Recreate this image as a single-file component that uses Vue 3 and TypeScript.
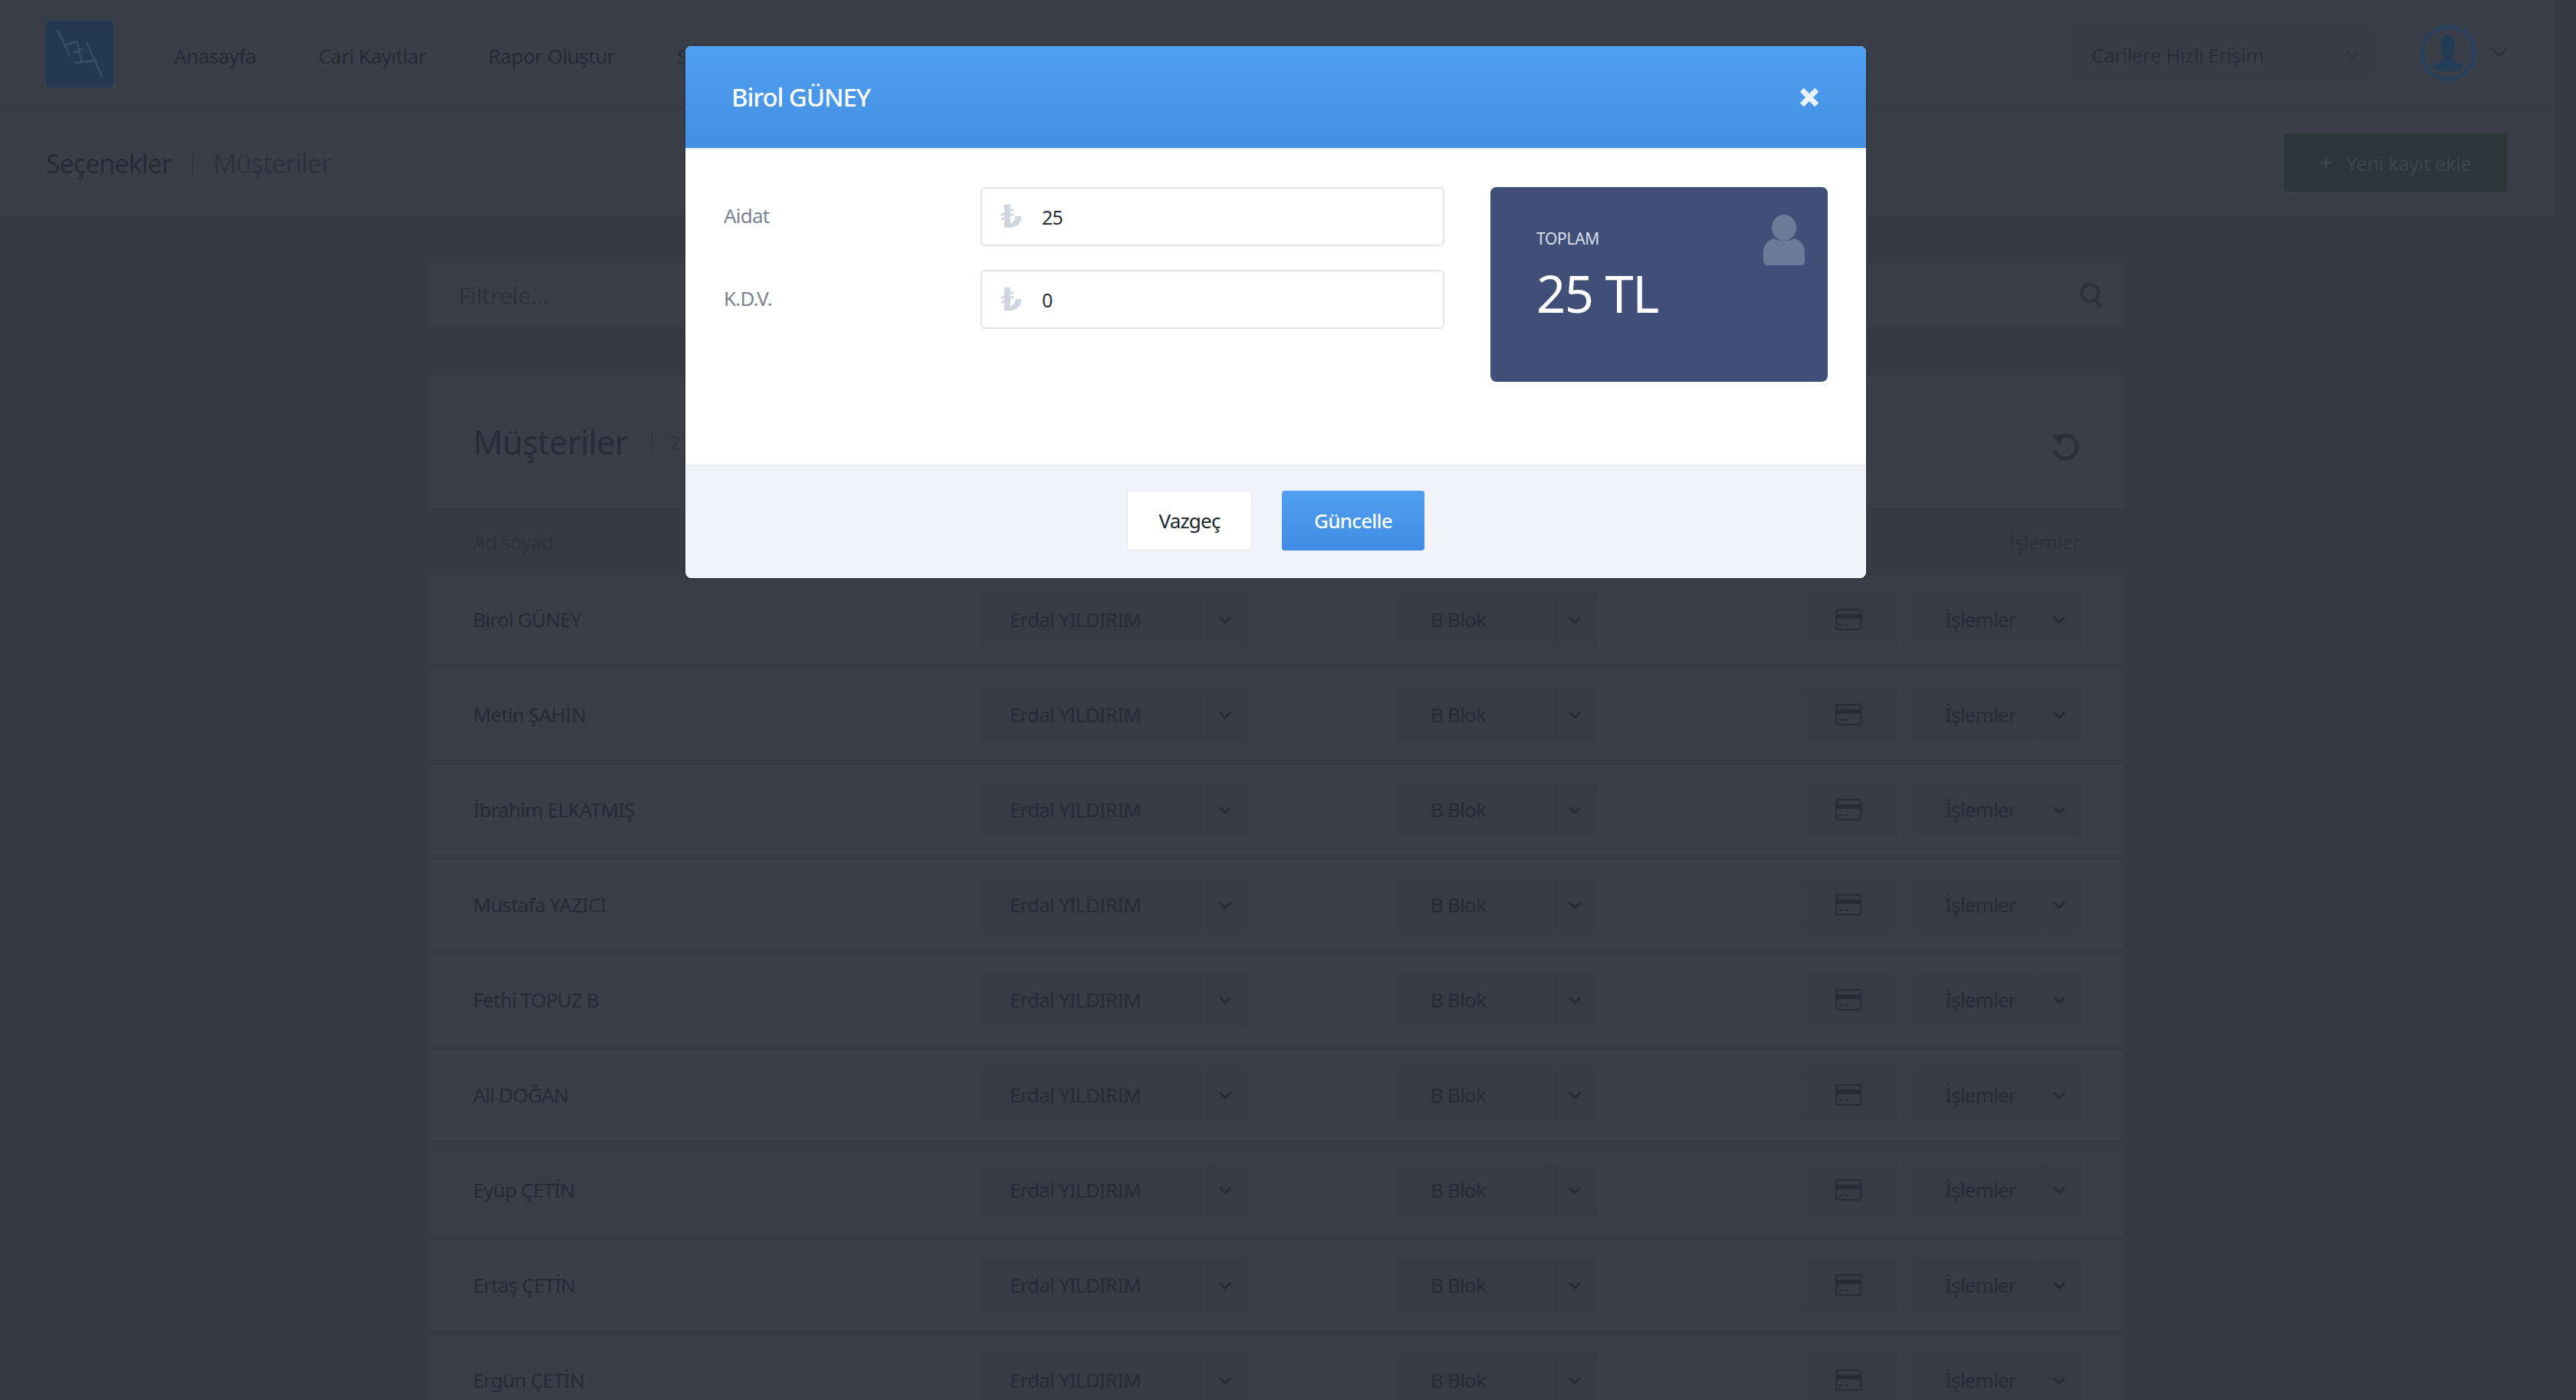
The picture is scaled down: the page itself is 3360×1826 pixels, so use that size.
<script setup lang="ts">
interface Row { name: string }
const navItems: string[] = ['Anasayfa', 'Cari Kayıtlar', 'Rapor Oluştur', 'Seçenekler']
const rows: Row[] = [
  { name: 'Birol GÜNEY' },
  { name: 'Metin ŞAHİN' },
  { name: 'İbrahim ELKATMIŞ' },
  { name: 'Mustafa YAZICI' },
  { name: 'Fethi TOPUZ B' },
  { name: 'Ali DOĞAN' },
  { name: 'Eyüp ÇETİN' },
  { name: 'Ertaş ÇETİN' },
  { name: 'Ergün ÇETİN' },
]
</script>

<template>
  <div class="page">
    <header class="topbar">
      <div class="logo">
        <svg width="88" height="87" viewBox="0 0 88 87" fill="none">
          <path d="M15 12 L32 47 M25 32 L40 27 L47 55 M36 42 L48 37 M53 28 L73 73 M37 55 L67 52" stroke="#3a4c62" stroke-width="2.5" />
        </svg>
      </div>
      <nav class="nav">
        <a v-for="item in navItems" :key="item" class="nav-item">{{ item }}</a>
      </nav>
      <div class="quick">
        <span>Carilere Hızlı Erişim</span>
        <svg class="chev" width="18" height="12" viewBox="0 0 18 12"><path d="M2 2l7 7 7-7" fill="none" stroke="#2f333f" stroke-width="2.5" /></svg>
      </div>
      <div class="avatar">
        <svg width="74" height="74" viewBox="0 0 74 74">
          <circle cx="37" cy="37" r="34" fill="none" stroke="#27405c" stroke-width="5" />
          <path d="M28 22c0-6 4-9 9-9s9 3 9 9v10c0 6-2 9-3 11l1 5c7 1 13 3 13 6 0 4-9 7-20 7s-20-3-20-7c0-3 6-5 13-6l1-5c-1-2-3-5-3-11z" fill="#223c55" />
        </svg>
      </div>
      <svg class="avatar-chev" width="22" height="14" viewBox="0 0 22 14"><path d="M2 2l9 9 9-9" fill="none" stroke="#2c303c" stroke-width="3" /></svg>
    </header>

    <section class="crumbs">
      <div class="crumb-text">
        <span class="crumb-main">Seçenekler</span>
        <span class="crumb-sep"></span>
        <span class="crumb-sub">Müşteriler</span>
      </div>
      <button class="add-btn"><span class="plus">+</span> Yeni kayıt ekle</button>
    </section>

    <main class="content">
      <div class="filter">
        <span>Filtrele...</span>
        <svg width="32" height="36" viewBox="0 0 32 36" fill="none"><circle cx="14" cy="15" r="11" stroke="#2e323d" stroke-width="4" /><path d="M21 24l7 9" stroke="#2e323d" stroke-width="5" /></svg>
      </div>
      <div class="list-card">
        <div class="list-head">
          <h2>Müşteriler</h2>
          <span class="head-sep"></span>
          <span class="count">214 kayıt</span>
          <svg class="reload" width="40" height="40" viewBox="0 0 40 40" fill="none"><path d="M10 10a15 15 0 1 1-3 15" stroke="#2b2f3a" stroke-width="5" /><path d="M3 5h13v13z" fill="#2b2f3a" /></svg>
        </div>
        <div class="col-head">
          <span>Ad soyad</span>
          <span>İşlemler</span>
        </div>
        <div v-for="row in rows" :key="row.name" class="row">
          <span class="row-name">{{ row.name }}</span>
          <div class="ctl ctl-owner">
            <span class="ctl-label">Erdal YILDIRIM</span>
            <span class="ctl-drop"><svg width="18" height="11" viewBox="0 0 18 11"><path d="M2 2l7 7 7-7" fill="none" stroke="#262a36" stroke-width="2.6" /></svg></span>
          </div>
          <div class="ctl ctl-block">
            <span class="ctl-label">B Blok</span>
            <span class="ctl-drop"><svg width="18" height="11" viewBox="0 0 18 11"><path d="M2 2l7 7 7-7" fill="none" stroke="#262a36" stroke-width="2.6" /></svg></span>
          </div>
          <div class="ctl ctl-card">
            <svg width="34" height="28" viewBox="0 0 34 28"><rect x="1" y="1" width="32" height="26" rx="2" fill="none" stroke="#282c38" stroke-width="2" /><rect x="1" y="7" width="32" height="6" fill="#282c38" /><path d="M5 21h5M12 21h4" stroke="#282c38" stroke-width="2" /></svg>
          </div>
          <div class="ctl ctl-actions">
            <span class="ctl-label">İşlemler</span>
            <span class="ctl-drop"><svg width="18" height="11" viewBox="0 0 18 11"><path d="M2 2l7 7 7-7" fill="none" stroke="#262a36" stroke-width="2.6" /></svg></span>
          </div>
        </div>
      </div>
    </main>

    <div class="overlay">
      <div class="modal">
        <div class="modal-head">
          <span class="modal-title">Birol GÜNEY</span>
          <svg class="close" width="28" height="28" viewBox="0 0 26 26"><path d="M4 4l18 18M22 4L4 22" stroke="#eaf2fb" stroke-width="6.5" /></svg>
        </div>
        <div class="modal-body">
          <div class="fields">
            <label class="field">
              <span class="field-label">Aidat</span>
              <span class="field-input"><span class="lira">₺</span><span class="value">25</span></span>
            </label>
            <label class="field">
              <span class="field-label">K.D.V.</span>
              <span class="field-input"><span class="lira">₺</span><span class="value">0</span></span>
            </label>
          </div>
          <div class="total">
            <div class="total-text">
              <div class="total-label">TOPLAM</div>
              <div class="total-value">25 TL</div>
            </div>
            <svg class="total-icon" width="54" height="66" viewBox="0 0 54 66" fill="#6b7a96">
              <ellipse cx="27" cy="17" rx="16" ry="17" />
              <path d="M14 31c4 4 22 4 26 0 9 2 14 9 14 18v11c0 4-2 6-6 6H6c-4 0-6-2-6-6V49c0-9 5-16 14-18z" />
            </svg>
          </div>
        </div>
        <div class="modal-foot">
          <button class="btn btn-light">Vazgeç</button>
          <button class="btn btn-primary">Güncelle</button>
        </div>
      </div>
    </div>
  </div>
</template>

<style>
html, body { margin: 0; background: #363a45; }
</style>

<style scoped>
.page {
  position: relative;
  height: 1826px;
  overflow: hidden;
  background: #363a45;
  font-family: "Noto Sans", "Liberation Sans", sans-serif;
  font-size: 26px;
  letter-spacing: -0.8px;
  color: #262a36;
}
.topbar {
  display: flex;
  align-items: center;
  box-sizing: border-box;
  width: 3331px;
  height: 143px;
  padding: 0 0 0 60px;
  background: #3a3e49;
  border-bottom: 6px solid #363a45;
}
.logo {
  width: 88px;
  height: 87px;
  margin-top: 3px;
  border-radius: 6px;
  background: #243950;
}
.nav {
  display: flex;
  gap: 81px;
  margin: 9px 0 0 79px;
  flex: 1;
  letter-spacing: -0.5px;
}
.nav-item { white-space: nowrap; }
.quick {
  display: flex;
  align-items: center;
  justify-content: space-between;
  box-sizing: border-box;
  width: 401px;
  height: 76px;
  margin-top: 6px;
  padding: 0 20px 0 32px;
  background: #383c47;
  color: #2a2e3a;
  letter-spacing: -0.5px;
}
.avatar { display: flex; margin-left: 59px; }
.avatar-chev { margin-left: 19px; margin-right: 60px; }
.crumbs {
  display: flex;
  align-items: center;
  justify-content: space-between;
  box-sizing: border-box;
  width: 3331px;
  height: 137px;
  padding: 0 61px 0 60px;
  background: #3a3e49;
}
.crumb-text { display: flex; align-items: center; margin-top: 2px; font-size: 34px; letter-spacing: -1px; }
.crumb-main { color: #272b37; }
.crumb-sep { width: 2px; height: 26px; margin: 0 26px; background: #33363f; }
.crumb-sub { color: #2e323e; }
.add-btn {
  box-sizing: border-box;
  width: 291px;
  height: 76px;
  border: 0;
  border-radius: 4px;
  background: #2c3638;
  color: #3a4648;
  font: inherit;
  letter-spacing: -0.6px;
}
.plus { margin-right: 12px; font-size: 30px; }
.content {
  display: flex;
  flex-direction: column;
  gap: 63px;
  width: 2210px;
  margin: 63px 0 0 560px;
}
.filter {
  display: flex;
  align-items: center;
  justify-content: space-between;
  box-sizing: border-box;
  height: 84px;
  padding: 0 26px 0 38px;
  background: #3a3e49;
  color: #2e323d;
  font-size: 31px;
  letter-spacing: -0.5px;
}
.list-head {
  display: flex;
  align-items: center;
  box-sizing: border-box;
  height: 173px;
  padding: 0 57px;
  background: #3a3e49;
}
.list-head h2 {
  margin: 0;
  font-size: 43px;
  font-weight: 400;
  letter-spacing: -0.6px;
  color: #282c38;
}
.head-sep { width: 2px; height: 28px; margin: 0 22px 0 30px; background: #33363f; }
.count { color: #2e323d; }
.reload { margin: 12px 0 0 auto; }
.col-head {
  display: flex;
  align-items: center;
  justify-content: space-between;
  box-sizing: border-box;
  height: 87px;
  padding: 0 57px;
  color: #2e323d;
}
.row {
  display: flex;
  align-items: center;
  box-sizing: border-box;
  height: 116px;
  margin-bottom: 8px;
  padding: 0 57px;
  background: #3a3e49;
}
.row-name { width: 663px; }
.ctl {
  display: flex;
  align-items: center;
  box-sizing: border-box;
  height: 64px;
  background: #373b46;
  box-shadow: 0 0 0 3px #383c47;
  color: #272b37;
}
.ctl-label { flex: 1; padding-left: 37px; }
.ctl-drop {
  display: flex;
  align-items: center;
  justify-content: center;
  width: 54px;
  height: 100%;
  border-left: 2px solid #3a3e49;
}
.ctl-owner { width: 345px; }
.ctl-block { width: 256px; margin-left: 200px; }
.ctl-block .ctl-label { padding-left: 41px; }
.ctl-card { justify-content: center; width: 119px; margin-left: 272px; padding-right: 4px; }
.ctl-actions { width: 216px; margin-left: 25px; }
.ctl-actions .ctl-label { padding-left: 40px; }
.overlay {
  position: absolute;
  inset: 0;
  display: flex;
  justify-content: center;
  align-items: flex-start;
  padding: 60px 0 0 0;
}
.modal {
  width: 1540px;
  margin-left: -32px;
  overflow: hidden;
  border-radius: 8px;
  background: #fff;
  box-shadow: 0 0 0 2px #30343e;
}
.modal-head {
  display: flex;
  align-items: center;
  justify-content: space-between;
  box-sizing: border-box;
  height: 135px;
  padding: 0 60px;
  background: linear-gradient(#4f9ff2, #4490e2);
  border-bottom: 2px solid #e8f3f6;
}
.modal-title {
  font-size: 33px;
  font-weight: 500;
  letter-spacing: -1.1px;
  color: #fff;
}
.modal-body {
  display: flex;
  justify-content: space-between;
  box-sizing: border-box;
  height: 411px;
  padding: 49px 50px 0;
}
.fields {
  display: flex;
  flex-direction: column;
  gap: 31px;
}
.field { display: flex; align-items: center; }
.field-label {
  width: 335px;
  margin-top: -4px;
  color: #7c8390;
}
.field-input {
  display: flex;
  align-items: center;
  box-sizing: border-box;
  width: 605px;
  height: 77px;
  padding: 0 30px 0 24px;
  border: 2px solid #e3e4e8;
  border-radius: 6px;
  background: #fff;
}
.lira {
  width: 54px;
  font-family: "DejaVu Sans", sans-serif;
  font-size: 40px;
  line-height: 44px;
  font-weight: 700;
  color: #cfd4de;
}
.value { font-size: 25px; color: #2a2e38; }
.total {
  display: flex;
  justify-content: space-between;
  box-sizing: border-box;
  width: 440px;
  height: 254px;
  padding: 36px 30px 0 60px;
  border-radius: 8px;
  background: #3f4f78;
}
.total-text { padding-top: 16px; }
.total-label { font-size: 21px; letter-spacing: -0.3px; line-height: 30px; color: #d8dde7; }
.total-value {
  margin-top: 16px;
  font-size: 67px;
  line-height: 80px;
  letter-spacing: -1.5px;
  color: #fff;
}
.modal-foot {
  display: flex;
  justify-content: center;
  align-items: center;
  gap: 39px;
  box-sizing: border-box;
  height: 148px;
  padding-bottom: 4px;
  background: #f1f4f9;
  border-top: 2px solid #e8e9ec;
}
.btn {
  box-sizing: border-box;
  height: 78px;
  border-radius: 4px;
  font: inherit;
  letter-spacing: inherit;
}
.btn-light {
  width: 163px;
  border: 1px solid #e8e6ec;
  background: #fff;
  color: #20242e;
}
.btn-primary {
  width: 186px;
  border: 0;
  background: linear-gradient(#4f9ff2, #3f8de4);
  color: #fff;
  font-weight: 500;
}
</style>
